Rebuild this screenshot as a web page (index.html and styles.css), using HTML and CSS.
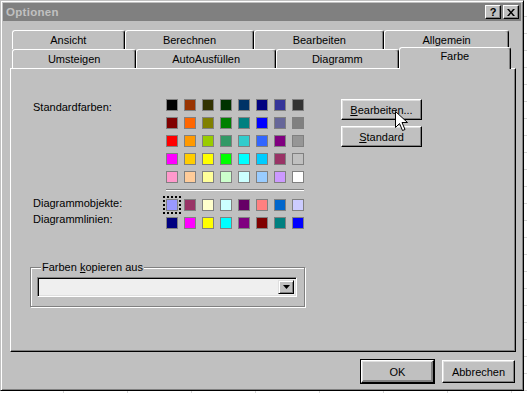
FILE: index.html
```html
<!DOCTYPE html>
<html lang="de">
<head>
<meta charset="UTF-8">
<title>Optionen</title>
<link rel="stylesheet" href="styles.css">
</head>
<body>
<div class="window">
  <div class="titlebar">
    <span class="title">Optionen</span>
    <div class="title-buttons">
      <span class="title-btn help">?</span>
      <span class="title-btn close">
        <svg width="8" height="7" viewBox="0 0 8 7"><path d="M0 0h2l2 2.5 2-2.5h2L5 3.5 8 7H6L4 4.5 2 7H0l3-3.5z" fill="#000"/></svg>
      </span>
    </div>
  </div>

  <div class="dialog-body">
    <!-- Tabs: back row, then front row with the selected tab -->
    <div class="tabs">
      <div class="tab-row">
        <div class="tab">Ansicht</div>
        <div class="tab">Berechnen</div>
        <div class="tab">Bearbeiten</div>
        <div class="tab">Allgemein</div>
      </div>
      <div class="tab-row front">
        <div class="tab">Umsteigen</div>
        <div class="tab">AutoAusfüllen</div>
        <div class="tab">Diagramm</div>
        <div class="tab selected">Farbe</div>
      </div>
    </div>

    <div class="panel">
      <div class="color-area">
        <div class="palette">
          <span class="label label-std">Standardfarben:</span>
          <span class="swatch" style="background:#000000"></span>
          <span class="swatch" style="background:#993300"></span>
          <span class="swatch" style="background:#333300"></span>
          <span class="swatch" style="background:#003300"></span>
          <span class="swatch" style="background:#003366"></span>
          <span class="swatch" style="background:#000080"></span>
          <span class="swatch" style="background:#333399"></span>
          <span class="swatch" style="background:#333333"></span>

          <span></span>
          <span class="swatch" style="background:#800000"></span>
          <span class="swatch" style="background:#ff6600"></span>
          <span class="swatch" style="background:#808000"></span>
          <span class="swatch" style="background:#008000"></span>
          <span class="swatch" style="background:#008080"></span>
          <span class="swatch" style="background:#0000ff"></span>
          <span class="swatch" style="background:#666699"></span>
          <span class="swatch" style="background:#808080"></span>

          <span></span>
          <span class="swatch" style="background:#ff0000"></span>
          <span class="swatch" style="background:#ff9900"></span>
          <span class="swatch" style="background:#99cc00"></span>
          <span class="swatch" style="background:#339966"></span>
          <span class="swatch" style="background:#33cccc"></span>
          <span class="swatch" style="background:#3366ff"></span>
          <span class="swatch" style="background:#800080"></span>
          <span class="swatch" style="background:#969696"></span>

          <span></span>
          <span class="swatch" style="background:#ff00ff"></span>
          <span class="swatch" style="background:#ffcc00"></span>
          <span class="swatch" style="background:#ffff00"></span>
          <span class="swatch" style="background:#00ff00"></span>
          <span class="swatch" style="background:#00ffff"></span>
          <span class="swatch" style="background:#00ccff"></span>
          <span class="swatch" style="background:#993366"></span>
          <span class="swatch" style="background:#c0c0c0"></span>

          <span></span>
          <span class="swatch" style="background:#ff99cc"></span>
          <span class="swatch" style="background:#ffcc99"></span>
          <span class="swatch" style="background:#ffff99"></span>
          <span class="swatch" style="background:#ccffcc"></span>
          <span class="swatch" style="background:#ccffff"></span>
          <span class="swatch" style="background:#99ccff"></span>
          <span class="swatch" style="background:#cc99ff"></span>
          <span class="swatch" style="background:#ffffff"></span>

          <span></span>
          <div class="separator"></div>

          <span class="label label-obj">Diagrammobjekte:</span>
          <span class="swatch focused" style="background:#9999ff"></span>
          <span class="swatch" style="background:#993366"></span>
          <span class="swatch" style="background:#ffffcc"></span>
          <span class="swatch" style="background:#ccffff"></span>
          <span class="swatch" style="background:#660066"></span>
          <span class="swatch" style="background:#ff8080"></span>
          <span class="swatch" style="background:#0066cc"></span>
          <span class="swatch" style="background:#ccccff"></span>

          <span class="label label-lines">Diagrammlinien:</span>
          <span class="swatch" style="background:#000080"></span>
          <span class="swatch" style="background:#ff00ff"></span>
          <span class="swatch" style="background:#ffff00"></span>
          <span class="swatch" style="background:#00ffff"></span>
          <span class="swatch" style="background:#800080"></span>
          <span class="swatch" style="background:#800000"></span>
          <span class="swatch" style="background:#008080"></span>
          <span class="swatch" style="background:#0000ff"></span>
        </div>

        <div class="side-buttons">
          <button class="btn"><u>B</u>earbeiten...</button>
          <button class="btn"><u>S</u>tandard</button>
        </div>
      </div>

      <fieldset class="copy-group">
        <legend>Farben <u>k</u>opieren aus</legend>
        <div class="combo">
          <span class="combo-text"></span>
          <span class="combo-arrow">
            <svg width="7" height="4" viewBox="0 0 7 4"><path d="M0 0h7L3.5 4z" fill="#000"/></svg>
          </span>
        </div>
      </fieldset>
    </div>

    <div class="dialog-buttons">
      <button class="btn default">OK</button>
      <button class="btn">Abbrechen</button>
    </div>
  </div>

  <!-- mouse pointer resting on the Bearbeiten button -->
  <svg class="cursor" width="13" height="21" viewBox="0 0 13 21">
    <path d="M0.5 0.5v16l4-4 3 7 2.5-1-3-7h5.5z" fill="#fff" stroke="#000" stroke-width="1"/>
  </svg>
</div>
</body>
</html>
```

FILE: styles.css
```css
body {
    margin: 0;
    font-family: "Liberation Sans", Arial, sans-serif;
    font-size: 11px;
    color: #000;
    background-color: #fff;
    background-image:
        repeating-linear-gradient(to bottom, transparent 0 16px, #d8d8d8 16px 17px),
        repeating-linear-gradient(to right, transparent 0 63px, #d8d8d8 63px 64px);
    width: 527px;
    height: 393px;
    overflow: hidden;
}

/* Window frame */
.window {
    position: relative;
    width: 524px;
    height: 391px;
    box-sizing: border-box;
    background: #c0c0c0;
    border: 1px solid;
    border-color: #c0c0c0 #000 #000 #c0c0c0;
    box-shadow: inset 1px 1px #fff, inset -1px -1px #808080;
    padding: 2px;
    display: flex;
    flex-direction: column;
}

.titlebar {
    height: 18px;
    background: #808080;
    display: flex;
    align-items: center;
    justify-content: space-between;
    padding: 0 2px 0 3px;
}
.title {
    color: #c0c0c0;
    font-weight: bold;
    font-size: 11.5px;
    letter-spacing: 0.3px;
}
.title-buttons {
    display: flex;
    gap: 1px;
}
.title-btn {
    width: 16px;
    height: 14px;
    box-sizing: border-box;
    background: #c0c0c0;
    border: 1px solid;
    border-color: #fff #000 #000 #fff;
    box-shadow: inset -1px -1px #808080;
    display: flex;
    align-items: center;
    justify-content: center;
    font-weight: bold;
    font-size: 11px;
    line-height: 1;
}
.title-btn.help {
    margin-right: 1px;
}

.dialog-body {
    flex: 1;
    display: flex;
    flex-direction: column;
    padding: 9px 5px 0 7px;
}

/* Tabs */
.tab-row {
    display: flex;
    padding: 0 7px 0 2px;
    height: 19px;
}
.tab {
    flex: 1 1 auto;
    padding: 0 10px;
    text-align: center;
    line-height: 18px;
    background: #c0c0c0;
    border-top: 1px solid #fff;
    border-left: 1px solid #fff;
    border-right: 1px solid #000;
    border-radius: 3px 3px 0 0;
    box-shadow: inset -1px 0 #808080;
}
.tab.selected {
    position: relative;
    z-index: 1;
    margin: -2px -2px -1px 0;
    padding: 0 16px 5px;
    line-height: 16px;
}

.panel {
    height: 284px;
    box-sizing: border-box;
    border: 1px solid;
    border-color: #fff #000 #000 #fff;
    box-shadow: inset -1px -1px #808080;
    padding: 30px 0 0 19px;
}

.color-area {
    display: flex;
    align-items: flex-start;
    padding-left: 3px;
}
.palette {
    display: grid;
    grid-template-columns: 127px repeat(8, 12px);
    grid-template-rows: repeat(5, 12px) 4px 12px 12px;
    gap: 6px;
}
.label {
    line-height: 12px;
    white-space: nowrap;
}
.label-std {
    margin-top: 2px;
}
.label-obj {
    margin-top: -2px;
}
.label-lines {
    margin-top: -4px;
}
.swatch {
    box-sizing: border-box;
    border: 1px solid #808080;
}
.swatch.focused {
    outline: 2px dotted #000;
    outline-offset: 1px;
}
.separator {
    grid-column: 2 / -1;
    height: 1px;
    background: #808080;
    border-bottom: 1px solid #fff;
}

.side-buttons {
    display: flex;
    flex-direction: column;
    gap: 6px;
    margin-left: 37px;
}

.btn {
    font-family: inherit;
    font-size: 11px;
    color: #000;
    background: #c0c0c0;
    border: 1px solid;
    border-color: #fff #000 #000 #fff;
    box-shadow: inset -1px -1px #808080, inset 1px 1px #dfdfdf;
    padding: 0;
    height: 21px;
    width: 81px;
}
.btn u {
    text-decoration-thickness: 1px;
}

/* Group box */
.copy-group {
    margin: 32px 0 0 0;
    width: 275px;
    box-sizing: border-box;
    border: 1px solid #808080;
    box-shadow: inset 1px 1px #fff, 1px 1px #fff;
    padding: 3px 6px 9px 6px;
}
.copy-group legend {
    padding: 0 1px;
    margin-left: 4px;
    line-height: 13px;
    background: #c0c0c0;
}
.combo {
    height: 20px;
    width: 260px;
    box-sizing: border-box;
    display: flex;
    justify-content: flex-end;
    background: #efefef;
    border: 1px solid;
    border-color: #808080 #fff #fff #808080;
    box-shadow: inset 1px 1px #000, inset -1px -1px #dfdfdf;
    padding: 2px;
}
.combo-text {
    flex: 1;
}
.combo-arrow {
    width: 16px;
    height: 14px;
    box-sizing: border-box;
    background: #c0c0c0;
    border: 1px solid;
    border-color: #dfdfdf #000 #000 #dfdfdf;
    box-shadow: inset 1px 1px #fff, inset -1px -1px #808080;
    display: flex;
    align-items: center;
    justify-content: center;
}

/* OK / Abbrechen */
.dialog-buttons {
    display: flex;
    justify-content: flex-end;
    gap: 8px;
    margin-top: 8px;
    padding-right: 1px;
}
.dialog-buttons .btn {
    width: 73px;
    height: 23px;
}
.btn.default {
    outline: 1px solid #000;
    outline-offset: 0;
    box-shadow: inset -1px -1px #808080, inset 1px 1px #dfdfdf, inset -2px -2px #808080;
}

.cursor {
    position: absolute;
    left: 394px;
    top: 110px;
}
```
